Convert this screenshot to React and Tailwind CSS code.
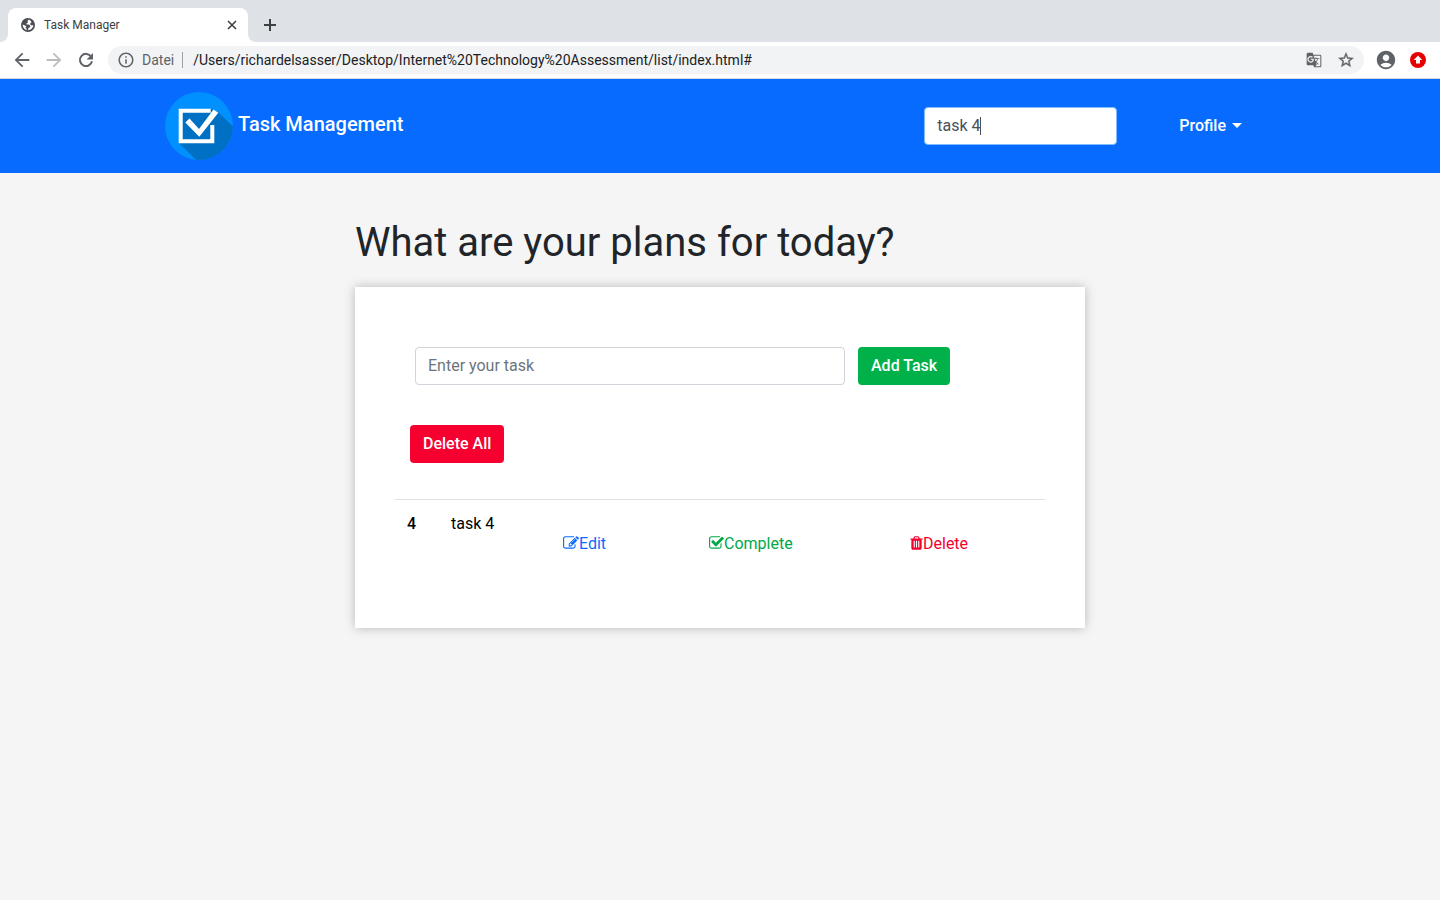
import React, { useState } from "react";
import {
  MdArrowBack,
  MdArrowForward,
  MdInfoOutline,
  MdAccountCircle,
  MdGTranslate,
} from "react-icons/md";

function TabCorner({ flip }) {
  return (
    <svg viewBox="0 0 8 8" className={flip ? "size-2 -scale-x-100" : "size-2"} aria-hidden="true">
      <path d="M8 0v8H0a8 8 0 0 0 8-8z" fill="#fff" />
    </svg>
  );
}

function GlobeIcon() {
  return (
    <svg viewBox="0 0 14 14" className="mr-[9px] size-3.5 shrink-0" aria-hidden="true">
      <circle cx="7" cy="7" r="7" fill="#4a4d51" />
      <path
        d="M7.800 1.600 6.400 3.200 7 4.600 5.400 5.400 5.600 6.600H8l1.400 1.300-.4 1.400-1.600.7-.4 2.200C9.800 12.200 12.300 10 12.300 7l-1.500.5-1.400-.7-.2-1.300 1.300-1.300C9.900 2.900 8.900 2 7.800 1.600z"
        fill="#fff"
      />
      <path d="M1.700 6.600C1.500 9 3.200 11.500 5.500 12.200V10.600L4.300 9.400 5.500 8.600 4 7.400z" fill="#fff" />
    </svg>
  );
}

function CloseIcon() {
  return (
    <svg viewBox="0 0 14 14" className="size-3.5" fill="none" stroke="currentColor" strokeWidth="1.600" aria-hidden="true">
      <path d="M3 3l8 8M11 3l-8 8" />
    </svg>
  );
}

function PlusIcon() {
  return (
    <svg viewBox="0 0 20 20" className="size-5" fill="none" stroke="currentColor" strokeWidth="2" aria-hidden="true">
      <path d="M10 4v12M4 10h12" />
    </svg>
  );
}

function ReloadIcon() {
  return (
    <svg viewBox="0 0 20 20" className="size-5" fill="none" aria-hidden="true">
      <path d="M15.200 6.700A6.100 6.100 0 1 0 16 11.300" stroke="currentColor" strokeWidth="2" />
      <path d="M17 3v6.400h-6.400z" fill="currentColor" />
    </svg>
  );
}

function StarIcon() {
  return (
    <svg viewBox="0 0 24 24" className="size-[18px]" fill="currentColor" stroke="currentColor" strokeWidth="0.500" aria-hidden="true">
      <path d="M22 9.240l-7.190-.62L12 2 9.190 8.630 2 9.240l5.460 4.730L5.820 21 12 17.270 18.180 21l-1.630-7.030L22 9.240zM12 15.400l-3.760 2.270 1-4.280-3.320-2.880 4.380-.38L12 6.100l1.710 4.040 4.380.38-3.320 2.880 1 4.280L12 15.400z" />
    </svg>
  );
}

function BrowserChrome() {
  return (
    <div className="text-[#5f6368]">
      <div className="flex h-[42px] items-end bg-[#dee1e6]">
        <TabCorner />
        <div className="flex h-[34px] w-60 items-center rounded-t-lg bg-white pr-2 pl-[13px] text-xs text-[#3c4043]">
          <GlobeIcon />
          <span className="flex-1">Task Manager</span>
          <button type="button" aria-label="Close tab" className="flex size-4 items-center justify-center">
            <CloseIcon />
          </button>
        </div>
        <TabCorner flip />
        <button type="button" aria-label="New tab" className="flex h-[34px] w-7 items-center justify-center text-[#3c4043]">
          <PlusIcon />
        </button>
      </div>
      <div className="flex h-[37px] items-center border-b border-[#d5d8dc] bg-white px-1.5">
        <button type="button" aria-label="Back" className="flex w-8 justify-center">
          <MdArrowBack size={22} />
        </button>
        <button type="button" aria-label="Forward" className="flex w-8 justify-center text-[#babcbe]">
          <MdArrowForward size={22} />
        </button>
        <button type="button" aria-label="Reload" className="flex w-8 justify-center">
          <ReloadIcon />
        </button>
        <div className="mx-1.5 flex h-7 flex-1 items-center rounded-full bg-[#f1f3f4] pr-0.5 pl-[9px] text-sm">
          <MdInfoOutline size={18} className="mr-[7px] shrink-0" />
          <span>Datei</span>
          <span className="mr-2.5 ml-2 h-4 w-px bg-[#9aa0a6]" />
          <input
            type="text"
            aria-label="Address"
            className="min-w-0 flex-1 bg-transparent text-[#202124] outline-none"
            defaultValue="/Users/richardelsasser/Desktop/Internet%20Technology%20Assessment/list/index.html#"
          />
          <button type="button" aria-label="Translate" className="flex w-8 justify-center">
            <MdGTranslate size={16} />
          </button>
          <button type="button" aria-label="Bookmark" className="flex w-8 justify-center">
            <StarIcon />
          </button>
        </div>
        <button type="button" aria-label="Account" className="flex w-8 justify-center">
          <MdAccountCircle size={22} />
        </button>
        <button type="button" aria-label="Update" className="flex w-8 justify-center">
          <svg viewBox="0 0 16 16" className="size-4">
            <circle cx="8" cy="8" r="8" fill="#e60000" />
            <path d="M8 3.500 12.200 8H10v3.600H6V8H3.800z" fill="#fff" />
          </svg>
        </button>
      </div>
    </div>
  );
}

function Logo() {
  return (
    <svg viewBox="0 0 68 68" className="size-[68px] shrink-0" aria-hidden="true">
      <defs>
        <clipPath id="disc">
          <circle cx="34" cy="34" r="34" />
        </clipPath>
      </defs>
      <g clipPath="url(#disc)">
        <rect width="68" height="68" fill="#0090ff" />
        <path d="M14 17h32l7 3 16 15.500V70H33L14 51z" fill="#0070c4" />
      </g>
      <path d="M45.700 18.700h-30v30.600h31.600V33" fill="none" stroke="#fff" strokeWidth="4" />
      <path d="M20.300 30.500 24.500 26.500 34 37 48.500 17.500 53.300 20.800 34.300 44.700z" fill="#fff" />
    </svg>
  );
}

function Navbar() {
  const [query, setQuery] = useState("task 4");
  return (
    <nav className="bg-[#076bff] text-white">
      <div className="mx-auto flex h-[94px] max-w-[1140px] items-center px-[15px]">
        <a href="#" className="flex items-center gap-[5px] text-xl font-medium">
          <Logo />
          <span className="pb-1">Task Management</span>
        </a>
        <div className="relative mr-[62px] ml-auto">
          <input
            type="text"
            aria-label="Search tasks"
            value={query}
            onChange={(e) => setQuery(e.target.value)}
            className="block h-[38px] w-[193px] rounded border border-[#80bdff] bg-white px-3 pb-0.5 text-base text-[#495057] outline-none"
          />
          <span className="absolute top-2.5 left-14 h-[18px] w-px bg-[#495057]" />
        </div>
        <button type="button" className="mr-[33px] flex items-center gap-1.5 text-base font-medium">
          Profile
          <svg viewBox="0 0 10 5" className="mb-0.5 h-[5px] w-2.5" aria-hidden="true">
            <path d="M0 0h10L5 5z" fill="currentColor" />
          </svg>
        </button>
      </div>
    </nav>
  );
}

function EditIcon() {
  return (
    <svg viewBox="0 0 1792 1792" className="mb-0.5 size-4" fill="currentColor" aria-hidden="true">
      <path d="M888 1184l116-116-152-152-116 116v56h96v96h56zm440-720q-16-16-33 1l-350 350q-17 17-1 33t33-1l350-350q17-17 1-33zm80 594v190q0 119-84.500 203.500t-203.500 84.500h-832q-119 0-203.500-84.500t-84.500-203.500v-832q0-119 84.500-203.500t203.500-84.500h832q63 0 117 25 15 7 18 23 3 17-9 29l-49 49q-14 14-32 8-23-6-45-6h-832q-66 0-113 47t-47 113v832q0 66 47 113t113 47h832q66 0 113-47t47-113v-126q0-13 9-22l64-64q15-15 35-7t20 29zm-96-738l288 288-672 672h-288v-288zm444 132l-92 92-288-288 92-92q28-28 68-28t68 28l152 152q28 28 28 68t-28 68z" />
    </svg>
  );
}

function CheckIcon() {
  return (
    <svg viewBox="64 0 1680 1792" className="mb-0.5 h-4 w-[15px]" fill="currentColor" aria-hidden="true">
      <path d="M1472 930v318q0 119-84.500 203.500t-203.500 84.500h-832q-119 0-203.500-84.500t-84.500-203.500v-832q0-119 84.500-203.500t203.500-84.500h832q63 0 117 25 15 7 18 23 3 17-9 29l-49 49q-10 10-23 10-3 0-9-2-23-6-45-6h-832q-66 0-113 47t-47 113v832q0 66 47 113t113 47h832q66 0 113-47t47-113v-254q0-13 9-22l64-64q10-10 23-10 6 0 12 3 20 8 20 29zm231-489l-814 814q-24 24-57 24t-57-24l-430-430q-24-24-24-57t24-57l110-110q24-24 57-24t57 24l263 263 647-647q24-24 57-24t57 24l110 110q24 24 24 57t-24 57z" />
    </svg>
  );
}

function TrashIcon() {
  return (
    <svg viewBox="192 0 1408 1792" className="mb-0.5 h-4 w-[13px]" fill="currentColor" aria-hidden="true">
      <path
        fillRule="evenodd"
        d="M704 1376v-704q0-32-32-32h-64q-32 0-32 32v704q0 32 32 32h64q32 0 32-32zM960 1376v-704q0-32-32-32h-64q-32 0-32 32v704q0 32 32 32h64q32 0 32-32zM1216 1376v-704q0-32-32-32h-64q-32 0-32 32v704q0 32 32 32h64q32 0 32-32zM672 384h448l-48-117q-7-9-17-11h-317q-10 2-17 11zM1600 416v64q0 32-32 32h-96v948q0 83-47 143.500t-113 60.500h-832q-66 0-113-58.500t-47-141.500v-952h-96q-32 0-32-32v-64q0-32 32-32h309l70-167q15-37 54-63t79-26h320q40 0 79 26t54 63l70 167h309q32 0 32 32z"
      />
    </svg>
  );
}

const tasks = [{ id: 4, title: "task 4" }];

function TaskTable() {
  return (
    <table className="w-full table-fixed border-t border-[#dee2e6] text-left text-black">
      <colgroup>
        <col className="w-[44px]" />
        <col className="w-[112px]" />
        <col className="w-[146px]" />
        <col className="w-[201px]" />
        <col />
      </colgroup>
      <tbody>
        {tasks.map((task) => (
          <tr key={task.id} className="align-top">
            <th scope="row" className="p-3 font-medium">
              {task.id}
            </th>
            <td className="p-3">{task.title}</td>
            <td className="px-3 pt-8 pb-3">
              <a href="#" className="inline-flex items-center text-[#0b6bff]">
                <EditIcon />
                Edit
              </a>
            </td>
            <td className="px-3 pt-8 pb-3">
              <a href="#" className="inline-flex items-center text-[#00a848]">
                <CheckIcon />
                Complete
              </a>
            </td>
            <td className="px-3 pt-8 pb-3">
              <a href="#" className="inline-flex items-center text-[#f3002f]">
                <TrashIcon />
                Delete
              </a>
            </td>
          </tr>
        ))}
      </tbody>
    </table>
  );
}

export default function App() {
  return (
    <div className="min-h-screen bg-[#f5f5f5] font-['Roboto',sans-serif] text-base text-[#212529]">
      <BrowserChrome />
      <Navbar />
      <main className="mx-auto max-w-[730px] pt-[46px]">
        <h1 className="mb-5 text-[40px] leading-[48px]">What are your plans for today?</h1>
        <section className="bg-white px-10 pt-[60px] pb-[58px] shadow-[0_0_10px_rgba(0,0,0,0.25)]">
          <form className="flex gap-[13px] pl-5" onSubmit={(e) => e.preventDefault()}>
            <input
              type="text"
              aria-label="Task"
              placeholder="Enter your task"
              className="h-[38px] w-[430px] rounded border border-[#ced4da] px-3 pb-0.5 placeholder:text-[#6c757d]"
            />
            <button type="submit" className="h-[38px] rounded bg-[#00b14a] px-[13px] font-medium text-white">
              Add Task
            </button>
          </form>
          <button
            type="button"
            className="mt-10 mb-9 ml-[15px] block h-[38px] rounded bg-[#f5002f] px-[13px] font-medium text-white"
          >
            Delete All
          </button>
          <TaskTable />
        </section>
      </main>
    </div>
  );
}
